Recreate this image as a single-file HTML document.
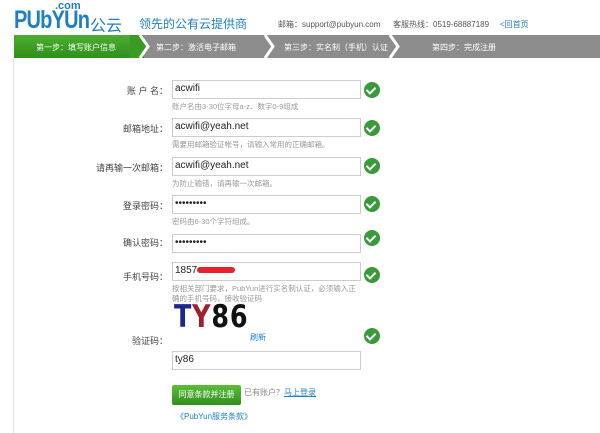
<!DOCTYPE html>
<html><head><meta charset="utf-8"><style>
*{margin:0;padding:0;box-sizing:border-box}
body{width:600px;height:433px;background:#fff;font-family:"Liberation Sans","Noto Sans CJK SC",sans-serif;position:relative;overflow:hidden;font-size:9px;color:#333}
.a{position:absolute;white-space:nowrap}
.logo{left:14px;top:6px;font-size:25px;font-weight:bold;color:#1e7fc4;letter-spacing:-1px;font-family:"Liberation Sans",sans-serif;transform:scaleX(0.8);transform-origin:left}
.com{left:55px;top:0px;font-size:11px;font-weight:bold;color:#1e7fc4}
.yun{left:90px;top:12px;font-size:16px;color:#1e7fc4}
.slogan{left:139px;top:15px;font-size:12px;color:#1e7fc4}
.info{top:19px;font-size:8px;color:#555}
.bar{left:14px;top:35px;width:586px;height:23px;background:#8c8c8c}
.s1{left:14px;top:35px;width:130px;height:23px;background:linear-gradient(#4cae30,#2f8f1c)}
.st{top:42px;font-size:8px;color:#fff}
.lbl{font-size:9px;color:#444;text-align:right;width:120px;left:48px}
.in{left:172px;width:189px;height:19px;border:1px solid #ccc;font-size:10px;color:#222;padding:2px 2px}
.hint{left:172px;font-size:7.5px;color:#999}
.ck{left:364px;width:16px;height:16px;border-radius:50%;background:#3a9a3a}
.ck:after{content:"";position:absolute;left:4px;top:3px;width:4px;height:7px;border:solid #fff;border-width:0 2px 2px 0;transform:rotate(45deg)}
</style></head><body>
<div class="a logo">PUbYUn</div><div class="a com">.com</div>
<div class="a yun">公云</div>
<div class="a slogan">领先的公有云提供商</div>
<div class="a info" style="left:278px">邮箱：support@pubyun.com</div>
<div class="a info" style="left:393px">客服热线：0519-68887189</div>
<div class="a info" style="left:500px;color:#1e7fc4">&lt;回首页</div>
<div class="a bar"></div><div class="a s1"></div>
<svg class="a" style="left:0;top:35px" width="600" height="23">
<polygon points="140,0 148,11.5 140,23 130,23 130,0" fill="#3a9a24"/>
<polyline points="140,0 148,11.5 140,23" fill="none" stroke="#fff" stroke-width="3"/>
<polyline points="265,0 273,11.5 265,23" fill="none" stroke="#fff" stroke-width="3"/>
<polyline points="390,0 398,11.5 390,23" fill="none" stroke="#fff" stroke-width="3"/>
</svg>
<div class="a st" style="left:36px">第一步：填写账户信息</div>
<div class="a st" style="left:156px">第二步：激活电子邮箱</div>
<div class="a st" style="left:284px">第三步：实名制（手机）认证</div>
<div class="a st" style="left:432px">第四步：完成注册</div>
<div class="a" style="left:13px;top:58px;width:1px;height:375px;background:#e4e4e4"></div>

<div class="a lbl" style="top:84px">账 户 名：</div><div class="a in" style="top:80px">acwifi</div><div class="a hint" style="top:101px">账户名由3-30位字母a-z、数字0-9组成</div><div class="a ck" style="top:82px"></div>
<div class="a lbl" style="top:122px">邮箱地址：</div><div class="a in" style="top:118px">acwifi@yeah.net</div><div class="a hint" style="top:139px">需要用邮箱验证帐号，请输入常用的正确邮箱。</div><div class="a ck" style="top:120px"></div>
<div class="a lbl" style="top:161px">请再输一次邮箱：</div><div class="a in" style="top:157px">acwifi@yeah.net</div><div class="a hint" style="top:178px">为防止输错，请再输一次邮箱。</div><div class="a ck" style="top:158px"></div>
<div class="a lbl" style="top:199px">登录密码：</div><div class="a in" style="top:195px">•••••••••</div><div class="a hint" style="top:216px">密码由6-30个字符组成。</div><div class="a ck" style="top:196px"></div>
<div class="a lbl" style="top:236px">确认密码：</div><div class="a in" style="top:234px">•••••••••</div><div class="a ck" style="top:230px"></div>
<div class="a lbl" style="top:270px">手机号码：</div><div class="a in" style="top:262px">1857<span style="display:inline-block;width:38px;height:6px;background:#e8222a;border-radius:3px;vertical-align:middle"></span></div><div class="a ck" style="top:267px"></div>
<div class="a hint" style="top:284px;line-height:10px">按相关部门要求，PubYun进行实名制认证，必须输入正<br>确的手机号码，接收验证码</div>
<div class="a" style="left:174px;top:299px;font-size:31px;font-weight:bold;letter-spacing:1px;font-family:'DejaVu Sans',sans-serif;transform:scaleX(0.82);transform-origin:left"><span style="color:#1a2a8a">T</span><span style="color:#a02030">Y</span><span style="color:#111">86</span></div>
<div class="a lbl" style="top:334px">验证码：</div><div class="a" style="left:250px;top:332px;color:#1e7fc4;font-size:8px">刷新</div><div class="a ck" style="top:328px"></div>
<div class="a in" style="top:351px">ty86</div>
<div class="a" style="left:172px;top:385px;width:69px;height:20px;background:linear-gradient(#5cbd3a,#2f8f1c);border-radius:2px;color:#fff;font-size:8px;text-align:center;line-height:20px">同意条款并注册</div>
<div class="a" style="left:244px;top:387px;font-size:8px;color:#888">已有账户？<span style="color:#1e7fc4;text-decoration:underline">马上登录</span></div>
<div class="a" style="left:176px;top:411px;font-size:8px;color:#1e7fc4">《PubYun服务条款》</div>
</body></html>
